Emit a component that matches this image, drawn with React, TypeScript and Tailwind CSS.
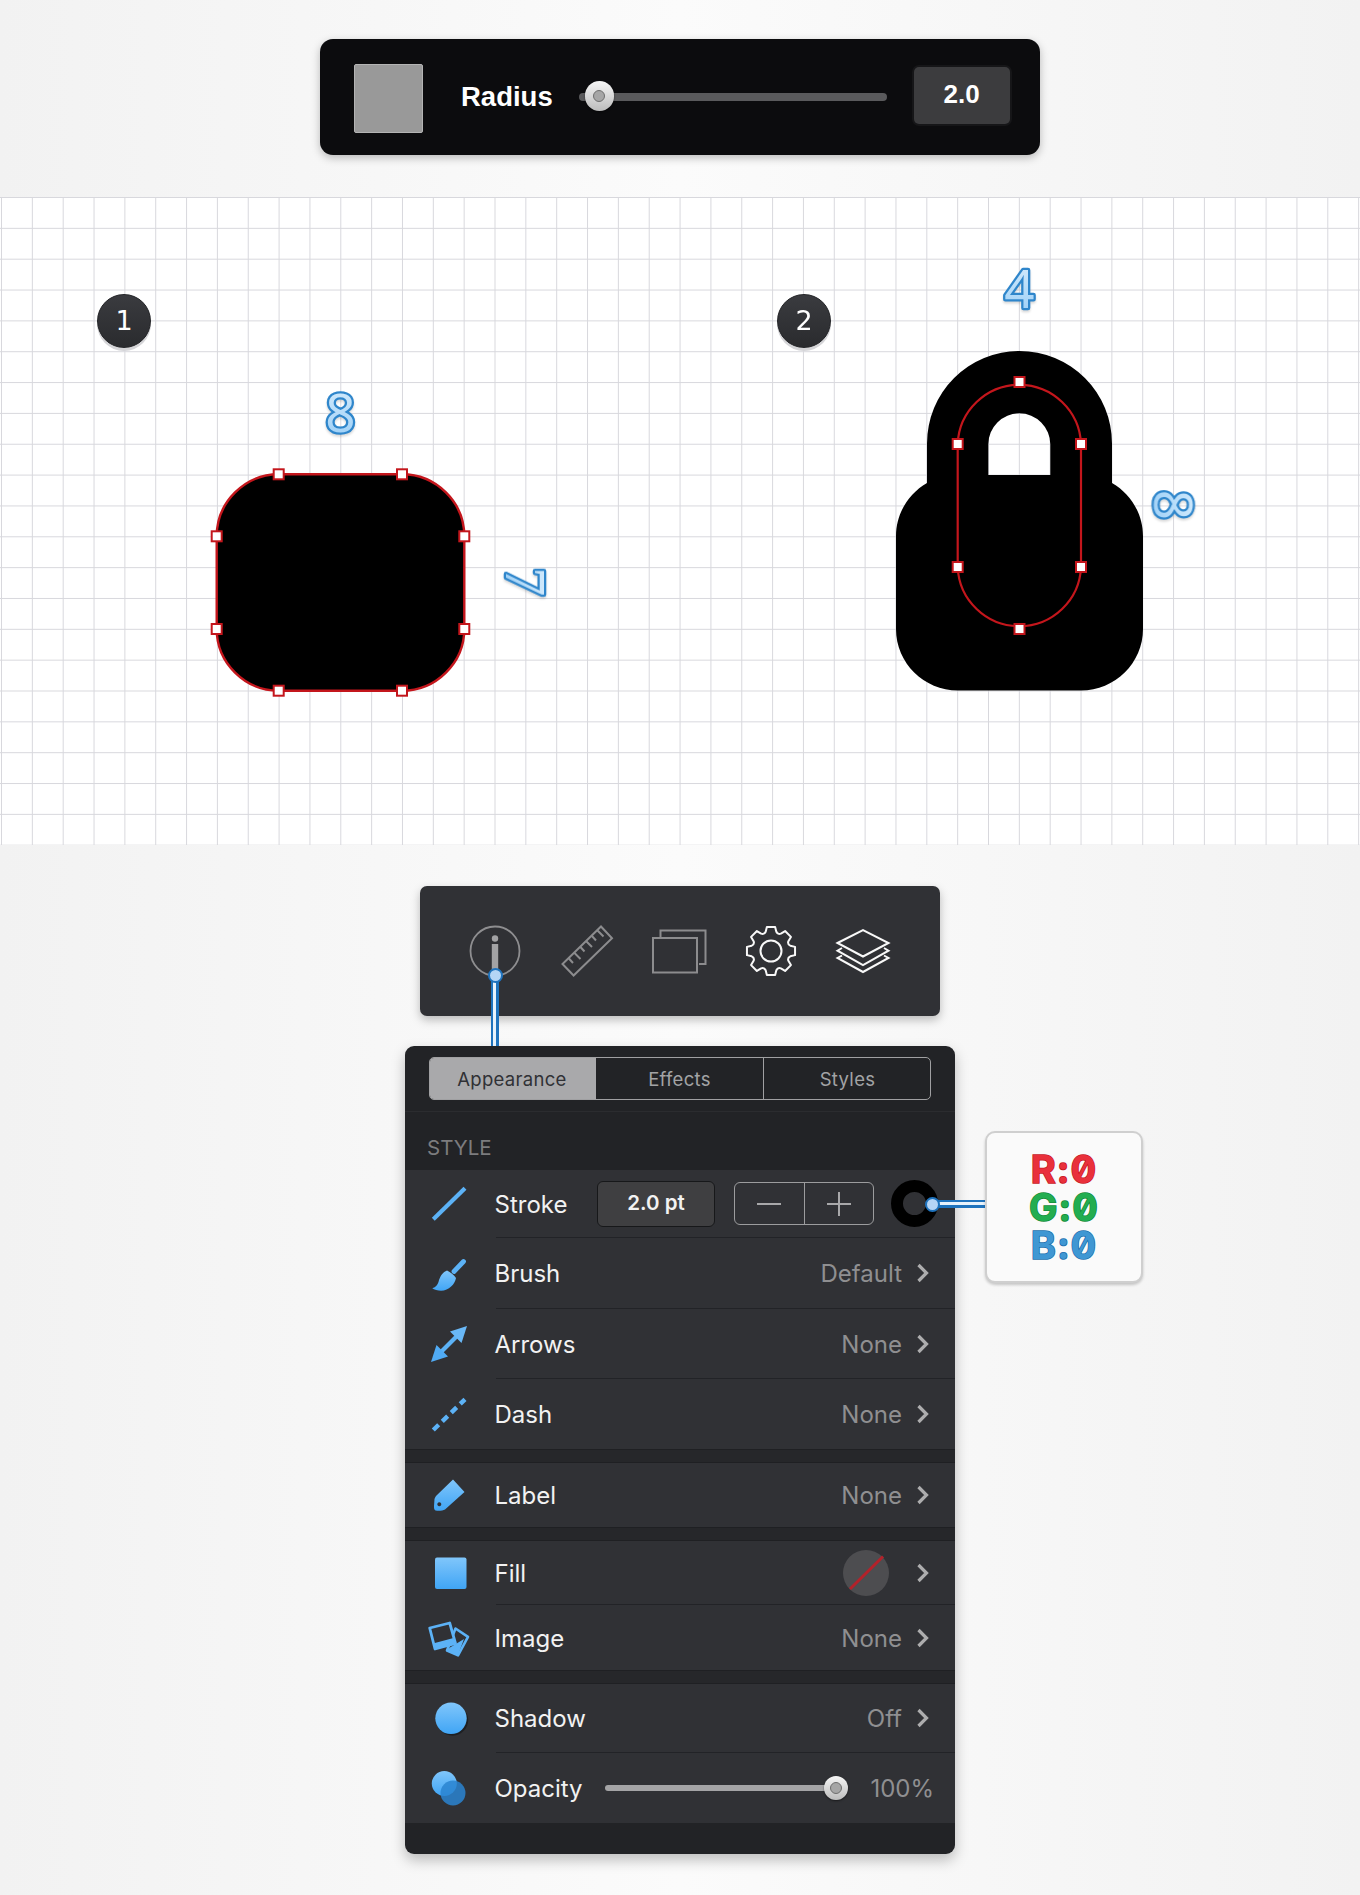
import type { ReactNode } from "react";

// 8 tooth gear outline, centred on 25,25
const gearPath = (() => {
  const c = 25;
  const pt = (r: number, a: number) => `${(c + r * Math.sin(a)).toFixed(2)} ${(c - r * Math.cos(a)).toFixed(2)}`;
  let d = "";
  for (let i = 0; i < 8; i++) {
    const a = (i * Math.PI) / 4;
    d += `${i === 0 ? "M" : "L"}${pt(20, a - 0.27)} L${pt(24.4, a - 0.17)} L${pt(24.4, a + 0.17)} L${pt(20, a + 0.27)} `;
    d += `Q${pt(17.6, a + Math.PI / 8)} ${pt(20, a + Math.PI / 4 - 0.27)} `;
  }
  return d + "Z";
})();

function Chevron() {
  return (
    <svg width="13" height="20" viewBox="0 0 13 20" className="shrink-0">
      <path d="M2.5 2 L10.5 10 L2.5 18" fill="none" stroke="#adadae" strokeWidth="3.2" />
    </svg>
  );
}

function Thumb({ className }: { className: string }) {
  return (
    <div className={`absolute flex items-center justify-center rounded-full bg-[linear-gradient(#f6f6f6,#bcbcbc)] shadow-[0_1px_2px_rgba(0,0,0,0.5)] ${className}`}>
      <div className="h-[12px] w-[12px] rounded-full border-[1.5px] border-[#6e6e6e] bg-[#a6a6a6]" />
    </div>
  );
}

function Row({
  icon,
  label,
  height,
  line = false,
  children,
}: {
  icon: ReactNode;
  label: string;
  height: string;
  line?: boolean;
  children?: ReactNode;
}) {
  return (
    <div className={`flex bg-[#303135] ${height}`}>
      <div className="flex w-[90.5px] shrink-0 items-center pl-[26px]">{icon}</div>
      <div className={`flex min-w-0 flex-1 items-center pr-[26px] ${line ? "border-b border-[#222327]" : ""}`}>
        <span className="-ml-[1px] pt-[2px] text-[24px] text-[#f2f2f2]">{label}</span>
        {children}
      </div>
    </div>
  );
}

function Value({ text }: { text: string }) {
  return (
    <div className="ml-auto flex items-center gap-[14px]">
      <span className="pt-[2px] text-[24px] text-[#8f8f91]">{text}</span>
      <Chevron />
    </div>
  );
}

function Icon({ children }: { children: ReactNode }) {
  return (
    <svg width="36" height="36" viewBox="0 0 36 36" className="overflow-visible">
      <defs>
        <linearGradient id="blue" x1="0" y1="0" x2="0" y2="1">
          <stop offset="0" stopColor="#80c6fb" />
          <stop offset="1" stopColor="#40a5f5" />
        </linearGradient>
      </defs>
      {children}
    </svg>
  );
}

function Node({ x, y }: { x: number; y: number }) {
  return <rect x={x - 5} y={y - 5} width="10" height="10" fill="#fff" stroke="#c4161c" strokeWidth="2" />;
}

const roundedNodes = [
  [278.7, 474.3],
  [402, 474.3],
  [216.7, 536.3],
  [464.3, 536.3],
  [216.7, 629],
  [464.3, 629],
  [278.7, 690.7],
  [402, 690.7],
];

const lockNodes = [
  [1019.5, 382],
  [957.7, 444],
  [1081, 444],
  [957.7, 567],
  [1081, 567],
  [1019.5, 629],
];

export default function App() {
  return (
    <div className="relative h-[1895px] w-full overflow-hidden bg-[linear-gradient(90deg,#f2f2f2,#fbfbfb_50%,#f2f2f2)] pt-[39px] font-['Inter',sans-serif]">
      {/* radius bar */}
      <div className="mx-auto flex h-[116px] w-[720px] items-center rounded-[13px] bg-[#0c0c0e] pl-[34px] shadow-[0_3px_8px_rgba(0,0,0,0.25)]">
        <div className="mt-[2px] h-[69px] w-[69px] rounded-[2px] border border-[#b4b4b4] bg-[#999999]" />
        <span className="ml-[38px] font-['Liberation_Sans',sans-serif] text-[27.5px] font-bold text-white">Radius</span>
        <div className="relative ml-[26px] h-[8px] w-[308px] rounded-full bg-[#5a5a5c]">
          <Thumb className="left-[6px] top-[-12px] h-[30px] w-[29px]" />
        </div>
        <div className="mb-[3px] ml-[27px] flex h-[57px] w-[96px] items-center justify-center rounded-[5px] bg-[#3c3c3e] pb-[2px] font-['Liberation_Sans',sans-serif] text-[26px] font-bold text-white shadow-[0_0_0_2px_#161618]">
          2.0
        </div>
      </div>

      {/* grid canvas */}
      <div className="relative mt-[42px] h-[648px] bg-white bg-[linear-gradient(#d8d8dd_1px,transparent_1px),linear-gradient(90deg,#d8d8dd_1px,transparent_1px)] bg-[length:30.85px_30.85px] bg-[position:1px_0]">
        <svg width="1360" height="648" viewBox="0 197 1360 648" className="absolute inset-0">
          <defs>
            <linearGradient id="digit" x1="0" y1="0" x2="0" y2="1">
              <stop offset="0" stopColor="#dff0fd" />
              <stop offset="1" stopColor="#93cbf6" />
            </linearGradient>
          </defs>
          <path
            d="M278.7 474.3 L402 474.3 C436 474.3 464.3 502 464.3 536.3 L464.3 629 C464.3 663 436 690.7 402 690.7 L278.7 690.7 C245 690.7 216.7 663 216.7 629 L216.7 536.3 C216.7 502 245 474.3 278.7 474.3 Z"
            fill="#000"
            stroke="#c4161c"
            strokeWidth="2.4"
          />
          {roundedNodes.map(([x, y]) => (
            <Node key={`${x}-${y}`} x={x} y={y} />
          ))}
          <path
            fillRule="evenodd"
            d="M927 483 L927 443.5 A92.5 92.5 0 0 1 1112 443.5 L1112 483 C1131 494 1143 514 1143 536 L1143 629 C1143 663 1115 690.5 1081 690.5 L958 690.5 C924 690.5 896 663 896 629 L896 536 C896 514 908 494 927 483 Z M988.3 475 L1050.3 475 L1050.3 444.3 A31 31 0 0 0 988.3 444.3 Z"
            fill="#000"
          />
          <path
            d="M957.7 444 A61.7 61.7 0 0 1 1081 444 L1081 567 A61.7 61.7 0 0 1 957.7 567 Z"
            fill="none"
            stroke="#c4161c"
            strokeWidth="2.2"
          />
          {lockNodes.map(([x, y]) => (
            <Node key={`${x}-${y}`} x={x} y={y} />
          ))}

          <g
            fill="url(#digit)"
            stroke="#2f86cb"
            strokeWidth="4.6"
            strokeLinejoin="round"
            textAnchor="middle"
            fontFamily="'Noto Sans', sans-serif"
            fontSize="53"
            className="[paint-order:stroke_fill] drop-shadow-[0_2px_1px_rgba(0,0,0,0.15)]"
          >
            <text x="340.3" y="432">8</text>
            <text x="1019.5" y="308">4</text>
            <text x="0" y="19" transform="translate(1173.3 505) rotate(90)">8</text>
            <text x="0" y="19" fontFamily="'Liberation Serif', serif" fontSize="58" transform="translate(525 581.7) rotate(90)">7</text>
          </g>
        </svg>

        <div className="absolute left-[97px] top-[97px] flex h-[54px] w-[54px] items-center justify-center rounded-full border border-[#222326] bg-[linear-gradient(#3a3b3f,#2a2b2e)] font-['DejaVu_Sans',sans-serif] text-[27px] text-white shadow-[0_3px_0_#d5d5d8]">1</div>
        <div className="absolute left-[777px] top-[97px] flex h-[54px] w-[54px] items-center justify-center rounded-full border border-[#222326] bg-[linear-gradient(#3a3b3f,#2a2b2e)] font-['DejaVu_Sans',sans-serif] text-[27px] text-white shadow-[0_3px_0_#d5d5d8]">2</div>
      </div>

      {/* tool strip */}
      <div className="mx-auto mt-[41px] flex h-[130px] w-[520px] items-center rounded-[7px] bg-[#303135] shadow-[0_4px_10px_rgba(0,0,0,0.25)]">
        <svg width="520" height="130" viewBox="420 886 520 130">
          <circle cx="495" cy="951" r="24.5" fill="none" stroke="#8e8e90" strokeWidth="1.8" />
          <circle cx="495" cy="938.5" r="3.2" fill="#a2a2a4" />
          <rect x="491.8" y="944" width="6.4" height="28" fill="#a2a2a4" />
          <g fill="none" stroke="#8c8c8e" strokeWidth="2">
            <path d="M601 926.5 L612 938.3 L573.6 975.5 L562.5 964 Z" />
            <path d="M568.5 958 L573 963 M574 952.5 L580.5 959 M580 946.5 L584.5 951.5 M586 941 L592 947 M591.5 935.5 L596 940.5 M597 930 L603.5 936.5" />
            <path d="M660.5 937 L660.5 930.5 L705.5 930.5 L705.5 964 L699 964" />
            <rect x="653" y="938" width="44" height="34.5" />
          </g>
          <g transform="translate(746 926)">
            <path d={gearPath} fill="none" stroke="#f8f8f8" strokeWidth="2" strokeLinejoin="round" />
            <circle cx="25" cy="25" r="10.5" fill="none" stroke="#f8f8f8" strokeWidth="2" />
          </g>
          <g fill="none" stroke="#f8f8f8" strokeWidth="2" strokeLinejoin="miter">
            <path d="M837.5 943 L863 930 L888.5 943 L863 956.5 Z" />
            <path d="M842 948 L837.5 950.7 L863 965 L888.5 950.7 L884 948" />
            <path d="M842 955.5 L837.5 958 L863 972 L888.5 958 L884 955.5" />
          </g>
        </svg>
      </div>

      {/* inspector */}
      <div className="mx-auto mt-[30px] flex w-[550px] flex-col overflow-hidden rounded-[9px] bg-[#222326] shadow-[0_6px_14px_rgba(0,0,0,0.25)]">
        <div className="h-[66px] border-b border-[#2b2c2f] px-[24px] pt-[11px]">
          <div className="flex h-[43px] overflow-hidden rounded-[5px] border-[1.5px] border-[#a0a0a2] pt-[2px] text-[18.5px] tracking-[0.3px]">
            <div className="-mt-[2px] flex w-[166px] items-center justify-center bg-[#a9a9ab] pr-[2px] pt-[2px] text-[#303135]">Appearance</div>
            <div className="-mt-[2px] flex w-[168px] items-center justify-center border-r-[1.5px] border-[#a0a0a2] pt-[2px] text-[#a3a3a5]">Effects</div>
            <div className="flex flex-1 items-center justify-center pl-[1px] text-[#a3a3a5]">Styles</div>
          </div>
        </div>
        <div className="flex h-[58px] items-center pl-[22px] pt-[14px] text-[20.5px] text-[#7c7c7e]">STYLE</div>

        <Row
          height="h-[68px]"
          label="Stroke"
          line
          icon={
            <Icon>
              <path d="M2.3 33.3 L34 2.3" stroke="#5cb2f6" strokeWidth="4.2" />
            </Icon>
          }
        >
          <div className="ml-auto flex h-[46px] w-[118px] items-center justify-center rounded-[6px] border border-[#17181a] bg-[#3f3f41] text-[20.5px] font-semibold text-[#f2f2f2]">2.0 pt</div>
          <div className="ml-[19px] flex h-[43px] w-[140px] items-center rounded-[6px] border-[1.5px] border-[#9c9c9e]">
            <div className="flex h-full flex-1 items-center justify-center border-r-[1.5px] border-[#9c9c9e]">
              <div className="h-[2px] w-[24px] bg-[#a8a8aa]" />
            </div>
            <div className="relative flex h-full flex-1 items-center justify-center">
              <div className="h-[2px] w-[24px] bg-[#a8a8aa]" />
              <div className="absolute h-[24px] w-[2px] bg-[#a8a8aa]" />
            </div>
          </div>
          <div className="-mr-[9px] ml-[17px] h-[47px] w-[47px] shrink-0 rounded-full border-[12px] border-black bg-[#303135]" />
        </Row>

        <Row
          height="h-[71px]"
          label="Brush"
          line
          icon={
            <Icon>
              <path d="M32.5 5.5 L23 15.5" stroke="#5cb2f6" strokeWidth="4.8" strokeLinecap="round" />
              <path d="M16 14.5 C19.5 16 23 19 25 22 C24 28 18 34.7 10 34.7 C7 34.7 3 34 1.3 32.3 C5 31 6.5 29 7.5 26 C9 20 12 16 16 14.5 Z" fill="url(#blue)" />
            </Icon>
          }
        >
          <Value text="Default" />
        </Row>

        <Row
          height="h-[70px]"
          label="Arrows"
          line
          icon={
            <Icon>
              <path d="M8 28 L28 8" stroke="#5cb2f6" strokeWidth="4.2" />
              <path d="M36 0 L30.5 17 L19 5.5 Z" fill="#69b8f7" />
              <path d="M0 36 L17 30.5 L5.5 19 Z" fill="#50abf5" />
            </Icon>
          }
        >
          <Value text="None" />
        </Row>

        <Row
          height="h-[70px]"
          label="Dash"
          icon={
            <Icon>
              <path d="M2.3 34 L34 3.3" stroke="#5cb2f6" strokeWidth="4.4" strokeDasharray="7.5 5" />
            </Icon>
          }
        >
          <Value text="None" />
        </Row>

        <div className="h-[14px] border-y border-[#1f2023] bg-[#26272a]" />

        <Row
          height="h-[64px]"
          label="Label"
          icon={
            <Icon>
              <path
                fillRule="evenodd"
                d="M22 2.5 L33.5 15 L14 32.5 C12 34 6 34 4.5 33.5 C3 33 3 31 3 29 L3.5 22 C4 20.5 4.5 19.5 6 18 Z M8.3 25.3 A2 2 0 1 0 8.31 25.3 Z"
                fill="url(#blue)"
              />
            </Icon>
          }
        >
          <Value text="None" />
        </Row>

        <div className="h-[14px] border-y border-[#1f2023] bg-[#26272a]" />

        <Row
          height="h-[64px]"
          label="Fill"
          line
          icon={
            <Icon>
              <rect x="4" y="2.5" width="31.5" height="31.5" rx="2" fill="url(#blue)" />
            </Icon>
          }
        >
          <div className="ml-auto flex items-center gap-[27px]">
            <svg width="46" height="46" viewBox="0 0 46 46">
              <circle cx="23" cy="23" r="23" fill="#4d4d50" />
              <path d="M7 39 L40 6.5" stroke="#b3222a" strokeWidth="3" />
            </svg>
            <Chevron />
          </div>
        </Row>

        <Row
          height="h-[65px]"
          label="Image"
          icon={
            <Icon>
              <path d="M24.5 8.5 L37 16.8 L27 35.3 L16 30.5 Z" fill="none" stroke="#5cb2f6" strokeWidth="2.6" strokeLinejoin="round" />
              <path d="M19 27.5 L33 19 L27 35 L15 31 Z" fill="#5cb2f6" />
              <path d="M-1.3 8 L18.7 3 L24.5 23.5 L4 29 Z" fill="#303135" stroke="#5cb2f6" strokeWidth="2.8" strokeLinejoin="round" />
              <path d="M2 23.5 L22.5 18 L24 23.5 L4 29 Z" fill="#5cb2f6" />
            </Icon>
          }
        >
          <Value text="None" />
        </Row>

        <div className="h-[14px] border-y border-[#1f2023] bg-[#26272a]" />

        <Row
          height="h-[69px]"
          label="Shadow"
          line
          icon={
            <Icon>
              <circle cx="21.5" cy="19" r="15.7" fill="#1a1b1e" opacity="0.8" />
              <circle cx="20" cy="17.3" r="15.7" fill="url(#blue)" />
            </Icon>
          }
        >
          <Value text="Off" />
        </Row>

        <Row
          height="h-[70px]"
          label="Opacity"
          icon={
            <Icon>
              <circle cx="13.3" cy="13.5" r="12.5" fill="url(#blue)" />
              <circle cx="22" cy="23" r="12.5" fill="#2a84d0" opacity="0.85" />
            </Icon>
          }
        >
          <div className="relative ml-[22px] h-[6px] w-[231px] rounded-full bg-[#a4a4a6]">
            <Thumb className="right-[-12px] top-[-9px] h-[24px] w-[24px]" />
          </div>
          <span className="-mr-[5px] ml-auto pt-[2px] text-[24px] text-[#8f8f91]">100%</span>
        </Row>

        <div className="h-[31px]" />
      </div>

      {/* connectors */}
      <div className="absolute left-[491px] top-[975px] h-[71px] w-[8px] border-l-2 border-r-[3px] border-[#1f73bd] bg-[#e8f3fc]" />
      <div className="absolute left-[488px] top-[968px] h-[15px] w-[15px] rounded-full border-2 border-[#1f73bd] bg-[#b5d5f6]" />
      <div className="absolute left-[932px] top-[1200px] h-[8px] w-[54px] border-b-[3px] border-t-2 border-[#1f73bd] bg-[#e8f3fc]" />
      <div className="absolute left-[925px] top-[1197px] h-[15px] w-[15px] rounded-full border-2 border-[#1f73bd] bg-[#b5d5f6]" />

      {/* rgb card */}
      <div className="absolute left-[985px] top-[1131px] flex h-[152px] w-[158px] flex-col items-center justify-center rounded-[10px] border-2 border-[#cfcfcf] bg-[#fafafa] text-[38px] font-bold leading-[38px] tracking-[1px] slashed-zero shadow-[0_2px_3px_rgba(0,0,0,0.2)]">
        <span className="text-[#e9303b] [-webkit-text-stroke:1.5px_#c5161f] [paint-order:stroke_fill]">R:0</span>
        <span className="text-[#22ad50] [-webkit-text-stroke:1.5px_#128a38] [paint-order:stroke_fill]">G:0</span>
        <span className="text-[#3f97d3] [-webkit-text-stroke:1.5px_#2070ae] [paint-order:stroke_fill]">B:0</span>
      </div>
    </div>
  );
}
